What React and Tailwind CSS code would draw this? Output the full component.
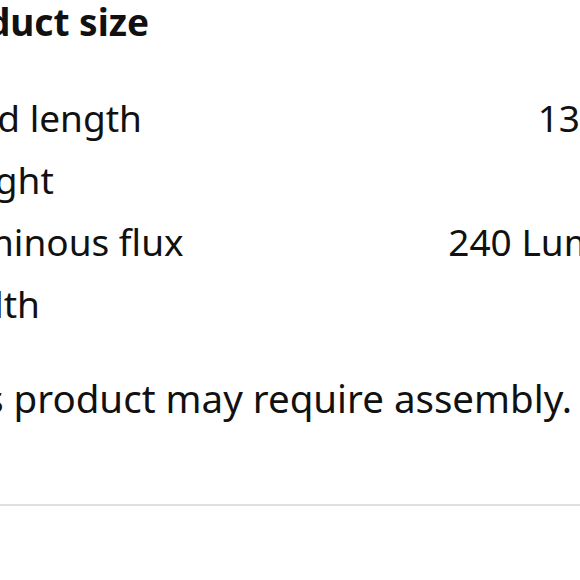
export default function App() {
  const rows = [
    { label: 'Cord length', value: '13 cm' },
    { label: 'Height', value: '' },
    { label: 'Luminous flux', value: '240 Lumen' },
    { label: 'Width', value: '' },
  ]

  return (
    <div className="h-[580px] w-[580px] overflow-hidden bg-white text-[#111111]" style={{ fontFamily: '"Noto Sans", sans-serif' }}>
      <div className="-ml-[63px] w-[705px]">
        <h2 className="-ml-[12px] text-[37px] font-bold leading-[44px]">Product size</h2>

        <div className="mt-[43px]">
          {rows.map((row) => (
            <div key={row.label} className="flex justify-between text-[37px] leading-[62px]">
              <span>{row.label}</span>
              <span>{row.value}</span>
            </div>
          ))}
        </div>

        <p className="-ml-[7px] mt-[39px] whitespace-nowrap text-[38.5px] leading-[48px]">This product may require assembly.</p>
      </div>

      <div className="mt-[82px] h-[2px] w-full bg-[#dfdfdf]" />
    </div>
  )
}
